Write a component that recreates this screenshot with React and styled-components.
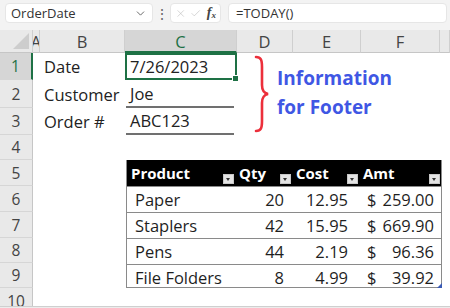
import React from 'react';
import styled, { createGlobalStyle, css } from 'styled-components';
import { ChevronDown, X, Check } from 'lucide-react';

const GREEN = '#1e7145';

const GlobalStyle = createGlobalStyle`
    html, body { margin: 0; padding: 0; background: #fff; }
    body {
        width: 450px;
        height: 308px;
        overflow: hidden;
        font-family: "Open Sans", "Noto Sans", sans-serif;
        color: #222;
    }
`;

const COLS = ['A', 'B', 'C', 'D', 'E', 'F', ''];
const ROWS = [1, 2, 3, 4, 5, 6, 7, 8, 9, 10];

const ITEMS = [
    { name: 'Paper', qty: 20, cost: '12.95', amt: '259.00' },
    { name: 'Staplers', qty: 42, cost: '15.95', amt: '669.90' },
    { name: 'Pens', qty: 44, cost: '2.19', amt: '96.36' },
    { name: 'File Folders', qty: 8, cost: '4.99', amt: '39.92' },
];

export default function App(){
    return(
        <>
        <GlobalStyle/>
        <Page>
            <FormulaBar>
                <NameBox>
                    <span>OrderDate</span>
                    <ChevronDown size={13} strokeWidth={1.6} color="#555"/>
                </NameBox>
                <Dots>⋮</Dots>
                <FnBox>
                    <X size={15} strokeWidth={1.2} color="#b8b8b8"/>
                    <Check size={15} strokeWidth={1.2} color="#b8b8b8"/>
                    <Fx>f<sub>x</sub></Fx>
                </FnBox>
                <FormulaInput>=TODAY()</FormulaInput>
            </FormulaBar>

            <Sheet>
                <Corner><CornerTriangle/></Corner>
                {COLS.map((c, i) =>
                    <ColHeader key={c + i} col={i + 2} selected={c === 'C'}>{c}</ColHeader>
                )}
                {ROWS.map(r =>
                    <RowHeader key={r} row={r + 1} selected={r === 1}>{r}</RowHeader>
                )}

                <Label row={2}>Date</Label>
                <Label row={3}>Customer</Label>
                <Label row={4}>Order #</Label>

                <ActiveCell>7/26/2023</ActiveCell>
                <InputCell row={3}>Joe</InputCell>
                <InputCell row={4}>ABC123</InputCell>

                <InfoBlock>
                    <svg width="18" height="78" viewBox="0 0 18 78">
                        <path
                            d="M3 2 C8 2 9 5 9 12 L9 30 C9 36 11 38 15 39 C11 40 9 42 9 48 L9 66 C9 73 8 76 3 76"
                            fill="none" stroke="#ec2f3b" strokeWidth="2.6" strokeLinecap="round"/>
                    </svg>
                    <InfoText>Information<br/>for Footer</InfoText>
                </InfoBlock>

                <Table>
                    <HeadCell>Product<DropButton/></HeadCell>
                    <HeadCell>Qty<DropButton/></HeadCell>
                    <HeadCell>Cost<DropButton/></HeadCell>
                    <HeadCell>Amt<DropButton/></HeadCell>
                    {ITEMS.map(item =>
                        <React.Fragment key={item.name}>
                            <BodyCell align="left">{item.name}</BodyCell>
                            <BodyCell align="right">{item.qty}</BodyCell>
                            <BodyCell align="right" pad={11}>{item.cost}</BodyCell>
                            <MoneyCell><span>$</span><span>{item.amt}</span></MoneyCell>
                        </React.Fragment>
                    )}
                    <ResizeHandle/>
                </Table>
            </Sheet>
            <ScrollStrip/>
        </Page>
        </>
    );
};

const Page = styled.div`
    width: 450px;
    height: 308px;
    display: flex;
    flex-direction: column;
    overflow: hidden;
    background: #fff;
`;

const FormulaBar = styled.div`
    height: 30px;
    flex: none;
    box-sizing: border-box;
    padding: 3px 3px 7px 5px;
    background: #f3f3f3;
    display: flex;
    align-items: stretch;
    font-size: 13px;
    color: #333;
`;

const NameBox = styled.div`
    width: 148px;
    box-sizing: border-box;
    background: #fff;
    border: 1px solid #e6e6e6;
    border-radius: 4px;
    padding: 0 5px;
    display: flex;
    align-items: center;
    justify-content: space-between;
`;

const Dots = styled.div`
    width: 17px;
    display: flex;
    align-items: center;
    justify-content: center;
    font-size: 14px;
    color: #666;
`;

const FnBox = styled.div`
    width: 51px;
    box-sizing: border-box;
    background: #fff;
    border: 1px solid #e6e6e6;
    border-radius: 4px;
    padding: 0 4px;
    display: flex;
    align-items: center;
    gap: 4px;
`;

const Fx = styled.span`
    font-family: "Liberation Serif", serif;
    font-style: italic;
    font-weight: bold;
    font-size: 14px;
    color: #444;
    margin-left: 1px;

    sub{
        font-size: 9px;
        vertical-align: -1px;
    }
`;

const FormulaInput = styled.div`
    flex: 1;
    margin-left: 7px;
    background: #fff;
    border: 1px solid #e6e6e6;
    border-radius: 4px;
    padding: 0 7px;
    display: flex;
    align-items: center;
`;

const Sheet = styled.div`
    flex: none;
    display: grid;
    grid-template-columns: 33px 7px 85px 112px 56px 68px 79px 1fr;
    grid-template-rows: 23px 27px 28px 27px 25px 26px 26px 26px 25px 25px 26px;
    height: 276px;
    overflow: hidden;
    font-size: 16.5px;
`;

const Corner = styled.div`
    grid-column: 1;
    grid-row: 1;
    background: #e9e9e9;
    border-right: 1px solid #cfcfcf;
    border-bottom: 1px solid #c6c6c6;
    display: flex;
    align-items: flex-end;
    justify-content: flex-end;
    padding: 0 3px 3px 0;
`;

const CornerTriangle = styled.div`
    width: 0;
    height: 0;
    border-left: 16px solid transparent;
    border-bottom: 16px solid #cdcdcd;
`;

const ColHeader = styled.div`
    grid-column: ${props => props.col};
    grid-row: 1;
    background: ${props => props.selected ? '#d6d6d6' : '#e9e9e9'};
    color: ${props => props.selected ? GREEN : '#444'};
    border-right: 1px solid #cfcfcf;
    border-bottom: ${props => props.selected ? `2px solid ${GREEN}` : '1px solid #c6c6c6'};
    display: flex;
    align-items: center;
    justify-content: center;
    overflow: hidden;
    box-sizing: border-box;
    padding-top: 1px;
`;

const RowHeader = styled.div`
    grid-column: 1;
    grid-row: ${props => props.row};
    background: ${props => props.selected ? '#d6d6d6' : '#e9e9e9'};
    color: ${props => props.selected ? GREEN : '#444'};
    border-right: ${props => props.selected ? `2px solid ${GREEN}` : '1px solid #c6c6c6'};
    border-bottom: 1px solid #d6d6d6;
    box-sizing: border-box;
    display: flex;
    align-items: center;
    justify-content: center;
    font-size: 15.5px;
`;

const Label = styled.div`
    grid-column: 3;
    grid-row: ${props => props.row};
    display: flex;
    align-items: center;
    padding-left: 4px;
    white-space: nowrap;
`;

const cellText = css`
    display: flex;
    align-items: center;
    box-sizing: border-box;
`;

const ActiveCell = styled.div`
    ${cellText};
    grid-column: 4;
    grid-row: 2;
    border: 2px solid ${GREEN};
    padding-left: 3px;
    position: relative;

    &::after{
        content: "";
        position: absolute;
        right: -4px;
        bottom: -4px;
        width: 5px;
        height: 5px;
        background: ${GREEN};
        border: 1px solid #fff;
    }
`;

const InputCell = styled.div`
    ${cellText};
    grid-column: 4;
    grid-row: ${props => props.row};
    margin: 0 3px 0 1px;
    padding-left: 4px;
    border-bottom: 2px solid #707070;
`;

const InfoBlock = styled.div`
    grid-column: 5 / 8;
    grid-row: 2 / 5;
    display: flex;
    align-items: center;
    padding: 0 0 0 16px;
    gap: 6px;
`;

const InfoText = styled.div`
    color: #3f57e4;
    font-weight: bold;
    font-size: 19px;
    line-height: 29px;
    margin-top: -3px;
`;

const Table = styled.div`
    grid-column: 4 / 8;
    grid-row: 6 / 11;
    margin-left: 1px;
    width: 316px;
    display: grid;
    grid-template-columns: 108px 57px 67px 1fr;
    grid-template-rows: 26px 26px 26px 26px 25px;
    border-left: 1.5px solid #8a8a8a;
    border-right: 1.5px solid #8a8a8a;
    border-bottom: 1.5px solid #8a8a8a;
    box-sizing: border-box;
    position: relative;
`;

const HeadCell = styled.div`
    background: #000;
    color: #fff;
    font-weight: bold;
    font-size: 15px;
    display: flex;
    align-items: center;
    justify-content: space-between;
    padding: 0 1px 0 4px;
`;

const DropButton = styled.div`
    align-self: flex-end;
    margin-bottom: 2px;
    width: 9px;
    height: 8px;
    background: #e4e4e4;
    border: 1px solid #c8c8c8;
    position: relative;

    &::after{
        content: "";
        position: absolute;
        left: 2px;
        top: 3px;
        border-left: 2.5px solid transparent;
        border-right: 2.5px solid transparent;
        border-top: 3px solid #333;
    }
`;

const BodyCell = styled.div`
    display: flex;
    align-items: center;
    justify-content: ${props => props.align === 'right' ? 'flex-end' : 'flex-start'};
    padding: ${props => props.align === 'right' ? `0 ${props.pad || 8}px 0 0` : '0 0 0 8px'};
    border-top: 1.5px solid #8a8a8a;
    color: #1f1f1f;
`;

const MoneyCell = styled.div`
    display: flex;
    align-items: center;
    justify-content: space-between;
    padding: 0 7px 0 8px;
    border-top: 1.5px solid #8a8a8a;
    color: #1f1f1f;
`;

const ResizeHandle = styled.div`
    position: absolute;
    right: -1px;
    bottom: -1px;
    width: 0;
    height: 0;
    border-left: 5px solid transparent;
    border-bottom: 5px solid #3b5bb5;
`;

const ScrollStrip = styled.div`
    flex: 1;
    background: #ececec;
    border-top: 1px solid #cfcfcf;
`;
